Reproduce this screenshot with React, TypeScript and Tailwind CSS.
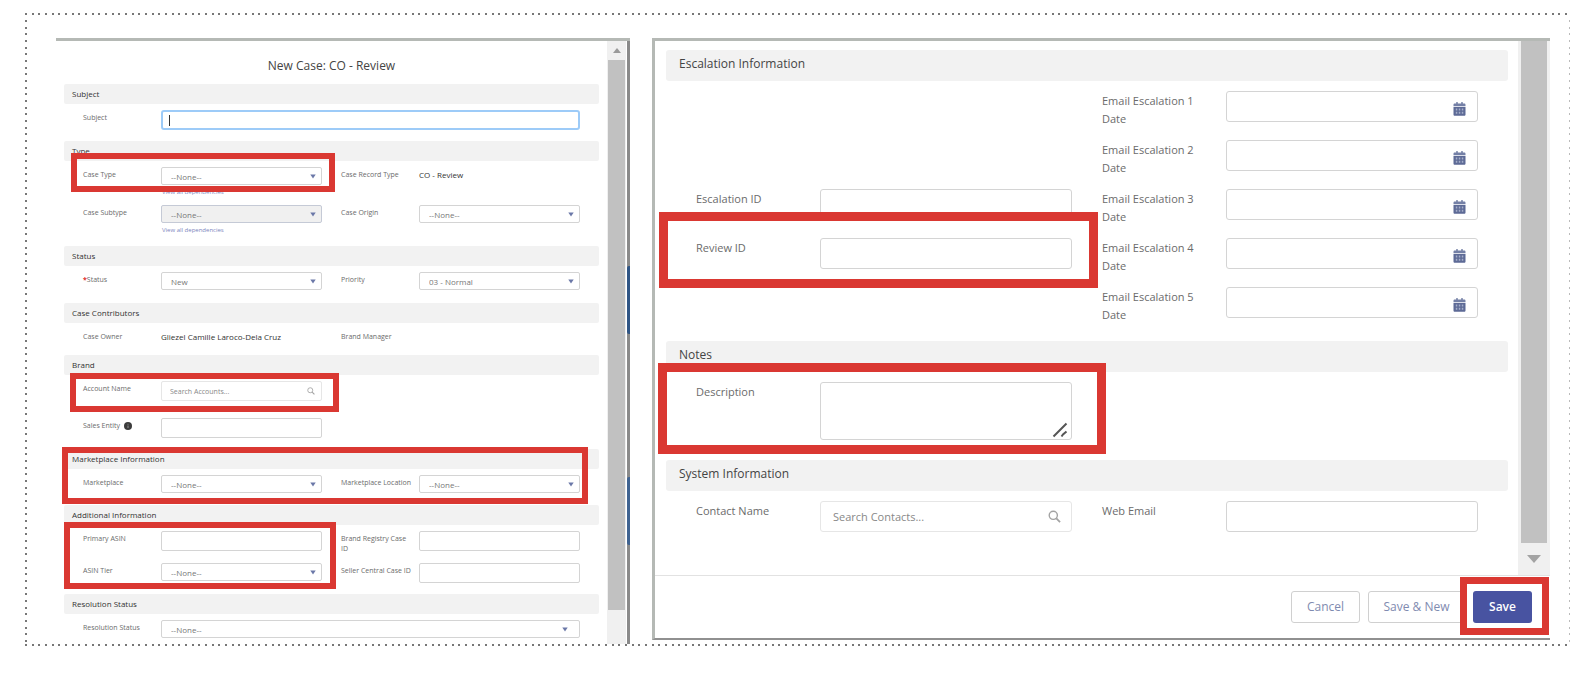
import React from 'react';

type Size = 'sm' | 'lg';

interface FieldProps {
  id: string;
  label: string;
  size?: Size;
  required?: boolean;
  info?: boolean;
  className?: string;
  children?: React.ReactNode;
}

const LABEL: Record<Size, string> = {
  sm: '-mb-1 pt-[3px] pr-[5px] text-[7px] leading-[10px]',
  lg: 'pt-[1px] pr-6 text-[11px] leading-[18px]',
};

const BOX = 'w-full border border-[#d4d4d4] bg-white text-[#666] outline-none placeholder:text-[#888]';

const Field: React.FC<FieldProps> = ({ id, label, size = 'sm', required, info, className = '', children }) => (
  <div className={`relative grid ${size === 'sm' ? 'min-h-5 grid-cols-[78px_minmax(0,1fr)]' : 'min-h-[37px] grid-cols-[124px_minmax(0,1fr)]'} items-start ${className}`}>
    <label htmlFor={id} className={`text-[#6b6b6b] ${LABEL[size]}`}>
      {required && <span className="font-bold text-[#e02b2b]">*</span>}
      {label}
      {info && <InfoIcon />}
    </label>
    <div className="relative">{children}</div>
  </div>
);

const InfoIcon = () => (
  <svg viewBox="0 0 10 10" className="ml-1 inline-block size-2 align-middle">
    <circle cx="5" cy="5" r="5" fill="#3c3c3c" />
    <path d="M5 2.3v1M5 4.4v3.2" stroke="#aaa" strokeWidth="1" />
  </svg>
);

const SearchIcon = ({ className }: { className: string }) => (
  <svg viewBox="0 0 14 14" fill="none" stroke="#a3a3a3" strokeWidth="1.5" className={`pointer-events-none absolute ${className}`}>
    <circle cx="5.7" cy="5.7" r="4.4" />
    <path d="M9 9l4 4" strokeWidth="1.9" />
  </svg>
);

const CalendarIcon = () => (
  <svg viewBox="0 0 13 14" className="pointer-events-none absolute right-3 top-[11px] h-[14px] w-[13px]">
    <path d="M1.8 1.6h1.4V.7a.7.7 0 0 1 1.6 0v.9h3.4V.7a.7.7 0 0 1 1.6 0v.9h1.4c.8 0 1.3.5 1.3 1.2v1.4H.5V2.8c0-.7.5-1.2 1.3-1.2z" fill="#7480a6" />
    <path d="M.5 5h12v7.4c0 .8-.5 1.3-1.3 1.3H1.8c-.8 0-1.3-.5-1.3-1.3z" fill="#5d6a96" />
    <path d="M2.8 6.6h1.5v2H2.8zM5.8 6.6h1.5v2H5.8zM8.8 6.6h1.5v2H8.8zM2.8 9.8h1.5v2H2.8zM5.8 9.8h1.5v2H5.8zM8.8 9.8h1.5v2H8.8z" fill="#a5aec9" />
  </svg>
);

const Picklist: React.FC<{ id: string; value: string; disabled?: boolean; wide?: boolean }> = ({ id, value, disabled, wide }) => (
  <>
    <select
      id={id}
      disabled={disabled}
      className={`block h-[18px] w-full appearance-none rounded-[2px] border pl-[9px] pt-[2px] text-[8px] leading-[14px] text-[#777] opacity-100 outline-none ${disabled ? 'border-[#c5cad6] bg-[#f0f0f0]' : 'border-[#d4d4d4] bg-white'}`}
    >
      <option>{value}</option>
    </select>
    <svg viewBox="0 0 6 5" className={`pointer-events-none absolute top-[7px] h-[5px] w-[6px] ${wide ? 'right-3' : 'right-1.5'}`}>
      <path d="M.3.4h5.4L3 4.6z" fill="#6b78a8" />
    </svg>
  </>
);

const TextBox: React.FC<{ id: string; size?: Size; placeholder?: string }> = ({ id, size = 'sm', placeholder }) => (
  <input
    id={id}
    type="text"
    placeholder={placeholder}
    className={`block ${BOX} ${size === 'sm' ? 'h-5 rounded-[2px] px-2 text-[7px]' : 'h-[31px] rounded-[3px] px-3 text-[11px]'} ${placeholder ? 'border-[#e6e6e6]' : ''}`}
  />
);

const DependencyLink = () => (
  <a href="#dependencies" className="block h-[14px] pl-[1px] text-[6px] leading-[14px] text-[#7c86bd]">View all dependencies</a>
);

const SmallHeading = ({ children }: { children: React.ReactNode }) => (
  <h3 className="h-5 rounded-[2px] bg-[#f2f2f2] pl-2 text-[8px] leading-5 text-[#333]">{children}</h3>
);

const LargeHeading = ({ children }: { children: React.ReactNode }) => (
  <h3 className="h-[31px] rounded-[3px] bg-[#f2f2f2] pl-[13px] text-[12px] leading-[28px] text-[#444]">{children}</h3>
);

const SmallRows = ({ className, children }: { className: string; children: React.ReactNode }) => (
  <div className={`relative grid grid-cols-2 gap-x-[19px] px-[19px] pt-1.5 ${className}`}>{children}</div>
);

const LargeRows = ({ className, children }: { className: string; children: React.ReactNode }) => (
  <div className={`grid grid-cols-2 gap-x-[30px] gap-y-3 px-[30px] pt-2.5 ${className}`}>{children}</div>
);

// red frame drawn over the fields the reader has to fill in
const Highlight = ({ className }: { className: string }) => (
  <div className={`pointer-events-none absolute z-10 border-[#da3832] ${className}`} />
);

const Backdrop = () => (
  <div className="flex w-[3px] flex-col bg-[#8a8a8a]">
    <div className="flex-[225]" />
    <div className="flex-[68] rounded-l-[2px] bg-[#2f5585]" />
    <div className="flex-[143]" />
    <div className="flex-[68] rounded-l-[2px] bg-[#3f6391]" />
    <div className="flex-[99]" />
  </div>
);

const CaseDetailsPanel = () => (
  <section className="border-t-[3px] border-[#b5b9b5]">
    <div className="flex">
      <form className="min-w-0 flex-1 px-2 pb-1">
        <h2 className="h-[43px] pt-[3px] text-center text-[12px] leading-[43px] text-[#444]">New Case: CO - Review</h2>

        <SmallHeading>Subject</SmallHeading>
        <SmallRows className="pb-[11px]">
          <Field id="subject" label="Subject" className="col-span-2">
            <input id="subject" type="text" className="block h-5 w-full rounded-[3px] border-2 border-[#9dcbf8] bg-white px-2 text-[8px] outline-none" />
            <span className="absolute left-2 top-[5px] h-[11px] w-px bg-[#333]" />
          </Field>
        </SmallRows>

        <SmallHeading>Type</SmallHeading>
        <SmallRows className="gap-y-1.5 pb-[9px]">
          <Field id="case-type" label="Case Type">
            <Picklist id="case-type" value="--None--" />
            <DependencyLink />
            <Highlight className="-left-[90px] -right-[13px] -top-[14px] h-[39px] border-[6px]" />
          </Field>
          <Field id="record-type" label="Case Record Type">
            <output id="record-type" className="block pt-[2px] text-[8px] leading-3 text-[#333]">CO - Review</output>
          </Field>
          <Field id="case-subtype" label="Case Subtype">
            <Picklist id="case-subtype" value="--None--" disabled />
            <DependencyLink />
          </Field>
          <Field id="case-origin" label="Case Origin">
            <Picklist id="case-origin" value="--None--" />
          </Field>
        </SmallRows>

        <SmallHeading>Status</SmallHeading>
        <SmallRows className="pb-[11px]">
          <Field id="status" label="Status" required>
            <Picklist id="status" value="New" />
          </Field>
          <Field id="priority" label="Priority">
            <Picklist id="priority" value="03 - Normal" />
          </Field>
        </SmallRows>

        <SmallHeading>Case Contributors</SmallHeading>
        <SmallRows className="pb-1.5">
          <Field id="case-owner" label="Case Owner">
            <output id="case-owner" className="block pt-[2px] text-[8px] leading-3 text-[#333]">Gliezel Camille Laroco-Dela Cruz</output>
          </Field>
          <Field id="brand-manager" label="Brand Manager">
            <output id="brand-manager" />
          </Field>
        </SmallRows>

        <SmallHeading>Brand</SmallHeading>
        <SmallRows className="gap-y-[17px] pb-[11px]">
          <Field id="account" label="Account Name" className="col-start-1">
            <TextBox id="account" placeholder="Search Accounts..." />
            <SearchIcon className="right-[7px] top-1.5 size-2" />
            <Highlight className="-left-[91px] -right-[17px] -top-2 h-[39px] border-[6px]" />
          </Field>
          <Field id="sales-entity" label="Sales Entity" info className="col-start-1">
            <TextBox id="sales-entity" />
          </Field>
        </SmallRows>

        <SmallHeading>Marketplace Information</SmallHeading>
        <SmallRows className="pb-2.5">
          <Highlight className="-left-[2px] right-[11px] -top-[22px] h-[57px] border-[6px]" />
          <Field id="marketplace" label="Marketplace">
            <Picklist id="marketplace" value="--None--" />
          </Field>
          <Field id="marketplace-location" label="Marketplace Location">
            <Picklist id="marketplace-location" value="--None--" />
          </Field>
        </SmallRows>

        <SmallHeading>Additional Information</SmallHeading>
        <SmallRows className="gap-y-3 pb-[11px]">
          <Field id="primary-asin" label="Primary ASIN">
            <TextBox id="primary-asin" />
            <Highlight className="-left-[97px] -right-[14px] -top-[9px] h-[67px] border-[6px]" />
          </Field>
          <Field id="brand-registry" label="Brand Registry Case ID">
            <TextBox id="brand-registry" />
          </Field>
          <Field id="asin-tier" label="ASIN Tier">
            <Picklist id="asin-tier" value="--None--" />
          </Field>
          <Field id="seller-central" label="Seller Central Case ID">
            <TextBox id="seller-central" />
          </Field>
        </SmallRows>

        <SmallHeading>Resolution Status</SmallHeading>
        <SmallRows className="">
          <Field id="resolution" label="Resolution Status" className="col-span-2">
            <Picklist id="resolution" value="--None--" wide />
          </Field>
        </SmallRows>
      </form>

      <div className="flex w-5 flex-col border-r border-white bg-[#f0f0f0] px-[1px]">
        <div className="flex h-[19px] items-center justify-center">
          <svg viewBox="0 0 8 5" className="h-[5px] w-2"><path d="M0 5L4 0l4 5z" fill="#9a9a9a" /></svg>
        </div>
        <div className="flex-[550] bg-[#c1c1c1]" />
        <div className="flex-[34]" />
      </div>
      <Backdrop />
    </div>
  </section>
);

const EscalationPanel = () => (
  <section className="border-b-2 border-l-[3px] border-t-[3px] border-b-[#909090] border-l-[#b5b9b5] border-t-[#b5b9b5]">
    <form>
      <div className="flex border-b border-[#e2e2e2]">
        <div className="min-w-0 flex-1 pb-[37px] pl-[11px] pr-2.5 pt-[9px]">
          <LargeHeading>Escalation Information</LargeHeading>
          <LargeRows className="pb-[17px]">
            {[1, 2, 3, 4, 5].map((n) => (
              <React.Fragment key={n}>
                {n === 3 && (
                  <Field id="escalation-id" label="Escalation ID" size="lg">
                    <TextBox id="escalation-id" size="lg" />
                  </Field>
                )}
                {n === 4 && (
                  <Field id="review-id" label="Review ID" size="lg">
                    <TextBox id="review-id" size="lg" />
                    <Highlight className="-left-[161px] -right-[26px] -top-[26px] h-[76px] border-[9px]" />
                  </Field>
                )}
                <Field id={`escalation-${n}`} label={`Email Escalation ${n} Date`} size="lg" className="col-start-2">
                  <TextBox id={`escalation-${n}`} size="lg" />
                  <CalendarIcon />
                </Field>
              </React.Fragment>
            ))}
          </LargeRows>

          <LargeHeading>Notes</LargeHeading>
          <LargeRows className="pb-5">
            <Field id="description" label="Description" size="lg">
              <textarea id="description" className={`block h-[58px] resize-none rounded-[3px] px-3 text-[11px] ${BOX}`} />
              <svg viewBox="0 0 16 16" className="pointer-events-none absolute bottom-[2px] right-1 size-4">
                <path d="M1.5 14.5l13-13M9.5 14.5l1.5-2 3.5-3" fill="none" stroke="#555" strokeWidth="2" />
              </svg>
              <Highlight className="-left-[162px] -right-[34px] -top-[19px] h-[91px] border-[9px]" />
            </Field>
          </LargeRows>

          <LargeHeading>System Information</LargeHeading>
          <LargeRows className="">
            <Field id="contact" label="Contact Name" size="lg">
              <TextBox id="contact" size="lg" placeholder="Search Contacts..." />
              <SearchIcon className="right-[11px] top-[9px] size-[13px]" />
            </Field>
            <Field id="web-email" label="Web Email" size="lg">
              <TextBox id="web-email" size="lg" />
            </Field>
          </LargeRows>
        </div>

        <div className="flex w-8 flex-col bg-[#f0f0f0] px-[3px]">
          <div className="flex-1 bg-[#c1c1c1]" />
          <div className="flex h-8 items-center justify-center">
            <svg viewBox="0 0 14 8" className="h-2 w-[14px]"><path d="M0 0h14L7 8z" fill="#a3a3a3" /></svg>
          </div>
        </div>
      </div>

      <div className="flex justify-end gap-2 py-[15px] pr-[18px] text-[12px]">
        <button type="button" className="h-8 w-[69px] rounded-[3px] border border-[#d0d0d0] bg-white text-[#7f8bb0]">Cancel</button>
        <button type="button" className="h-8 w-[97px] rounded-[3px] border border-[#d0d0d0] bg-white text-[#7f8bb0]">Save &amp; New</button>
        <div className="relative">
          <button type="submit" className="h-8 w-[59px] rounded-[3px] bg-[#4853a1] font-semibold text-white">Save</button>
          <Highlight className="-left-[13px] -right-[17px] -top-[14px] h-[58px] border-[7px]" />
        </div>
      </div>
    </form>
  </section>
);

const DOTS_X = 'h-[2px] bg-[linear-gradient(90deg,#777_0_2px,transparent_2px_7px,#777_7px_9px,transparent_9px_13px,#777_13px_15px,transparent_15px)] bg-[length:20px_2px]';
const DOTS_Y = 'bg-[length:2px_20px]';

const App: React.FC = () => (
  <main className="min-h-screen bg-white pl-[25px] pt-[13px] font-['Open_Sans','Noto_Sans',sans-serif]">
    <div className={DOTS_X} />
    <div className="flex">
      <div className={`w-[2px] ${DOTS_Y} bg-[linear-gradient(180deg,transparent_0_5px,#777_5px_7px,transparent_7px_12px,#777_12px_14px,transparent_14px_18px,#777_18px)]`} />
      <div className="grid min-w-0 flex-1 grid-cols-[574fr_898fr] items-start gap-[22px] pl-[29px] pr-[19px] pt-[23px]">
        <CaseDetailsPanel />
        <EscalationPanel />
      </div>
      <div className={`w-px ${DOTS_Y} bg-[linear-gradient(180deg,transparent_0_5px,#bbb_5px_7px,transparent_7px_12px,#bbb_12px_14px,transparent_14px_18px,#bbb_18px)]`} />
    </div>
    <div className={DOTS_X} />
  </main>
);

export default App;
